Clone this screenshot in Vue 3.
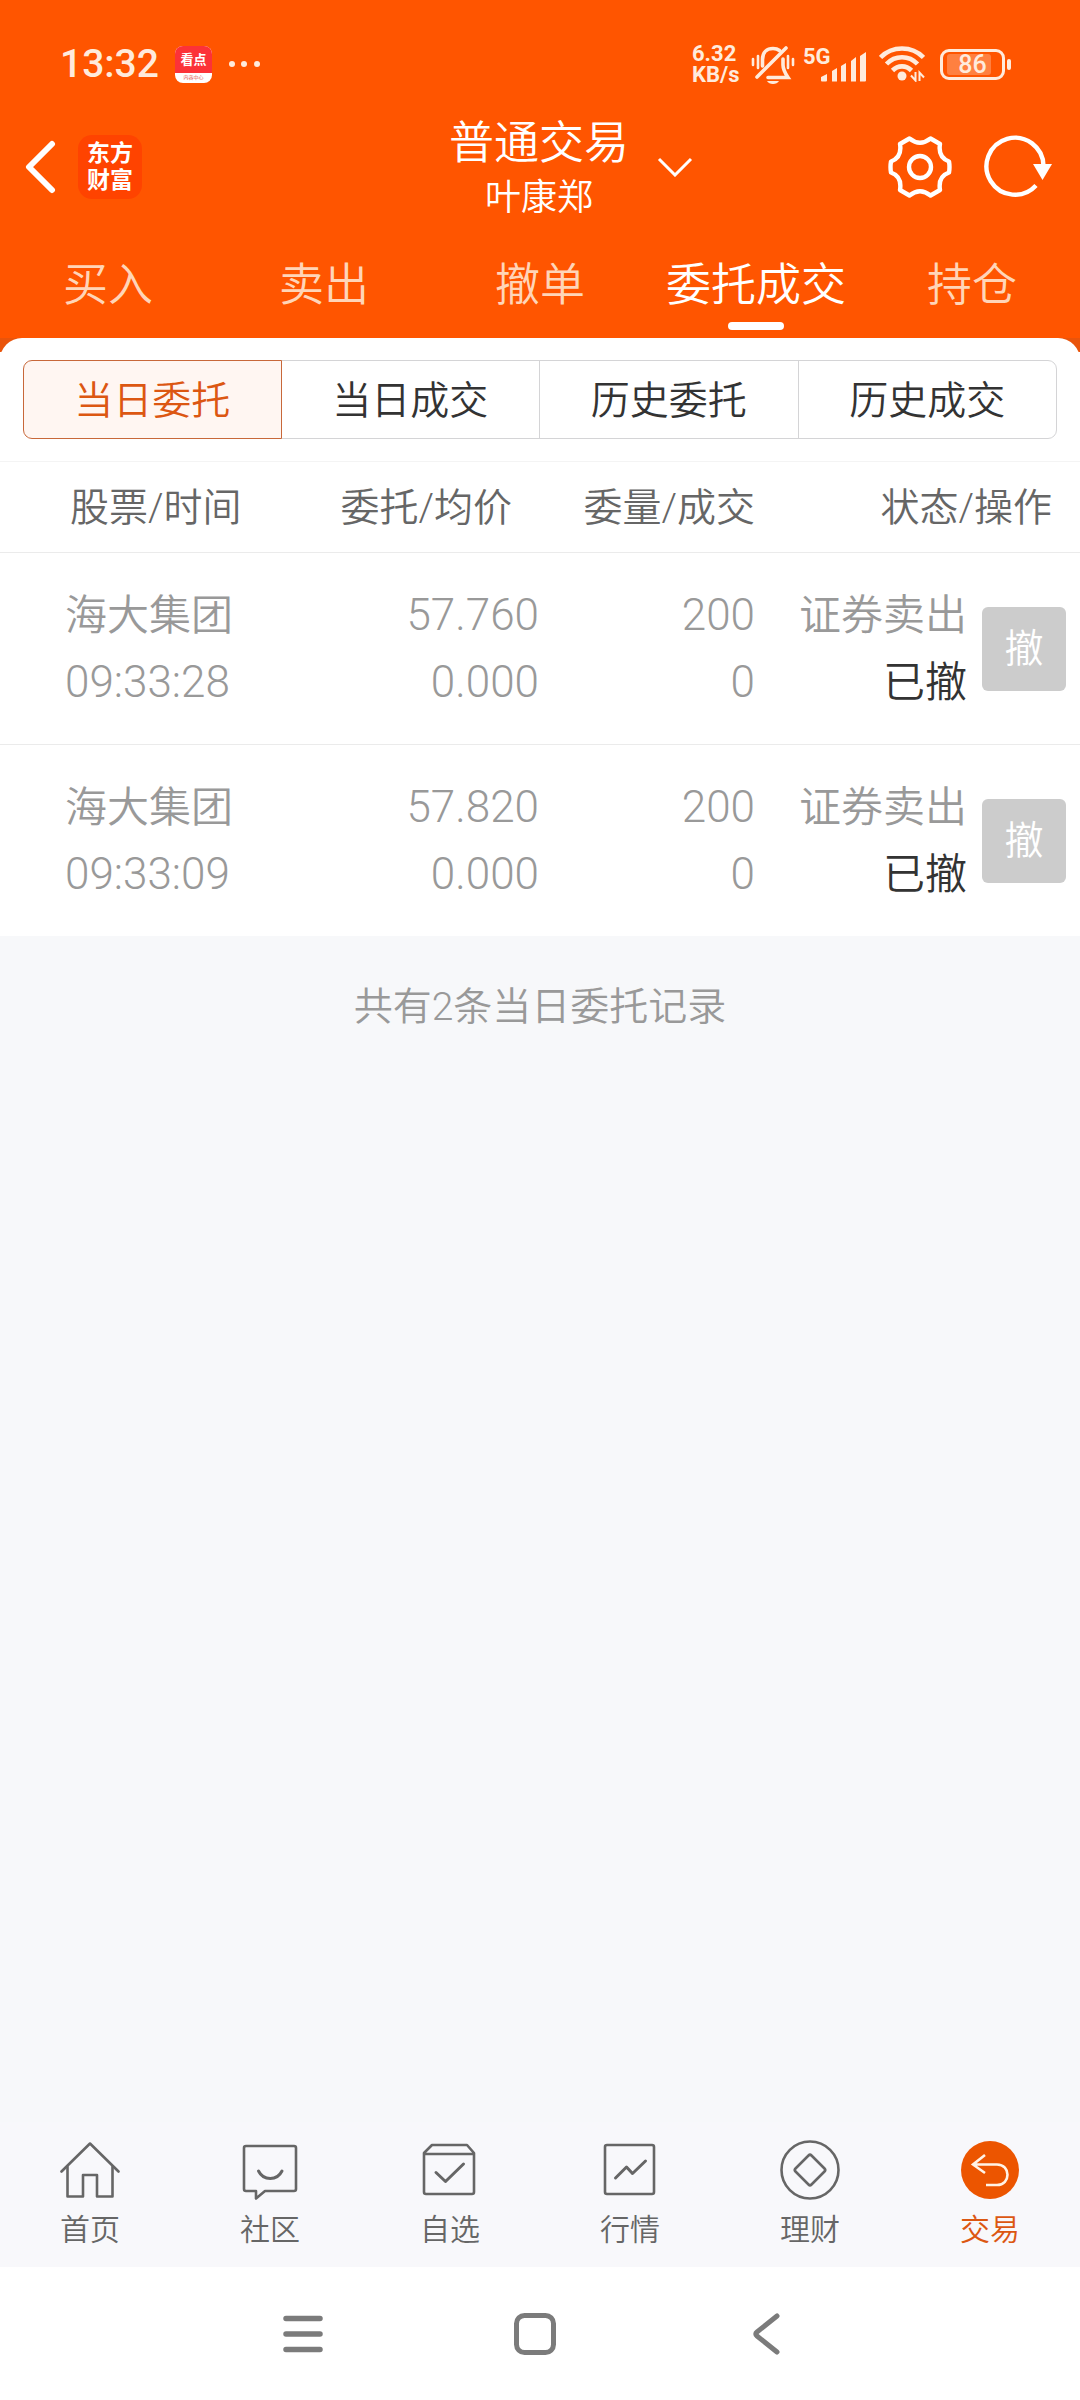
<template>
    <div class="trade-page">
        <header class="header">
            <div class="status-bar">
                <div class="status-left">
                    <span class="clock">13:32</span>
                    <span class="app-badge">
                        <span class="app-badge-title">看点</span>
                        <span class="app-badge-sub">内容中心</span>
                    </span>
                    <svg class="dots" viewBox="0 0 32 8" width="32" height="8">
                        <circle cx="4" cy="4" r="3" />
                        <circle cx="16" cy="4" r="3" />
                        <circle cx="29" cy="4" r="3" />
                    </svg>
                </div>
                <div class="status-right">
                    <span class="net-speed">
                        <span>6.32</span>
                        <span>KB/s</span>
                    </span>
                    <svg class="bell" viewBox="0 0 44 40" width="44" height="40">
                        <g fill="none" stroke="currentColor" stroke-width="3.600" stroke-linecap="round">
                            <path d="M2 15v6M7 12v12M37 12v12M42 15v6" stroke-width="2.600" />
                            <path d="M11.500 22V15.500C11.500 8 16 4.500 22 4.500c3 0 5 .8 6.500 2" />
                            <path d="M32 15v6c0 5 2 8 5 12.500H17" />
                            <path d="M35 4L6 33" />
                        </g>
                        <path d="M16 37h12c-2 4-10 4-12 0z" fill="currentColor" />
                    </svg>
                    <span class="signal">
                        <span class="signal-type">5G</span>
                        <svg viewBox="0 0 46 30" width="46" height="30">
                            <path d="M0 25l6-3v6.500q0 1-1 1H1q-1 0-1-1zM11 19l5-3v13.500h-5zM20 14l5-3v18.500h-5zM30 9l5-4v24.500h-5zM39 4l6-4v28.500q0 1-1 1h-5z" fill="currentColor" />
                        </svg>
                    </span>
                    <svg class="wifi" viewBox="0 0 46 36" width="46" height="36">
                        <g fill="none" stroke="currentColor" stroke-width="4.600">
                            <path d="M1.500 11.500C13-.5 33-.5 44.500 11.500" />
                            <path d="M7.500 18C16 9 30 9 38.500 18" />
                            <path d="M13.500 24.500c5.500-5.500 13.500-5.500 19 0" />
                        </g>
                        <circle cx="23" cy="30" r="4.500" fill="currentColor" />
                        <path d="M36.500 26v8.500l-4.500-5M40.500 35v-8.500l4.500 5" fill="none" stroke="currentColor" stroke-width="2" />
                    </svg>
                    <span class="battery">
                        <span class="battery-body">
                            <span class="battery-level" :style="{ width: battery + '%' }"></span>
                            <span class="battery-text">{{ battery }}</span>
                        </span>
                        <span class="battery-tip"></span>
                    </span>
                </div>
            </div>

            <div class="title-bar">
                <div class="title-left">
                    <button class="icon-button" type="button" aria-label="返回">
                        <svg viewBox="0 0 32 54" width="32" height="54">
                            <path d="M28 4L5 27l23 23" fill="none" stroke="#fff" stroke-width="6" stroke-linecap="round" stroke-linejoin="round" />
                        </svg>
                    </button>
                    <a class="logo" href="#">东方<br>财富</a>
                </div>
                <div class="account">
                    <h1 class="account-title">普通交易</h1>
                    <p class="account-name">叶康郑</p>
                </div>
                <div class="title-right">
                    <button class="icon-button" type="button" aria-label="切换账户">
                        <svg viewBox="0 0 36 20" width="36" height="20">
                            <path d="M2 2l16 16L34 2" fill="none" stroke="#fff" stroke-width="3" />
                        </svg>
                    </button>
                    <div class="title-actions">
                        <button class="icon-button" type="button" aria-label="设置">
                            <svg viewBox="0 0 64 64" width="64" height="64">
                                <g fill="none" stroke="#fff" stroke-width="4.400" stroke-linejoin="round">
                                    <path d="M21.500 3.500Q32 12 42.500 3.500L52 9C50.500 18 54 24 61 26.500Q62 32 61 37.500C54 40 50.500 46 52 55L42.500 60.500Q32 52 21.500 60.500L12 55C13.500 46 10 40 3 37.500Q2 32 3 26.500C10 24 13.500 18 12 9Z" />
                                    <circle cx="32" cy="32" r="11" />
                                </g>
                            </svg>
                        </button>
                        <button class="icon-button" type="button" aria-label="刷新">
                            <svg viewBox="0 0 70 64" width="70" height="64">
                                <path d="M52 50.500A28.500 28.500 0 1 1 59.500 31" fill="none" stroke="#fff" stroke-width="4.400" />
                                <path d="M49 29h19l-9.500 16z" fill="#fff" />
                            </svg>
                        </button>
                    </div>
                </div>
            </div>

            <nav class="tabs">
                <a v-for="tab in tabs" :key="tab" href="#" class="tab" :class="{ 'is-active': tab === activeTab }" @click.prevent="activeTab = tab">
                    <span>{{ tab }}</span>
                </a>
            </nav>
        </header>

        <main class="content">
            <section class="panel-wrap">
                <div class="panel">
                    <div class="segment">
                        <button
                            v-for="item in segments"
                            :key="item"
                            type="button"
                            class="segment-item"
                            :class="{ 'is-active': item === activeSegment }"
                            @click="activeSegment = item"
                        >
                            {{ item }}
                        </button>
                    </div>

                    <table class="orders">
                        <colgroup>
                            <col class="col-stock">
                            <col class="col-price">
                            <col class="col-amount">
                            <col class="col-status">
                            <col class="col-action">
                        </colgroup>
                        <thead>
                            <tr>
                                <th class="stock">股票/时间</th>
                                <th class="price">委托/均价</th>
                                <th class="amount">委量/成交</th>
                                <th class="status" colspan="2">状态/操作</th>
                            </tr>
                        </thead>
                        <tbody>
                            <tr v-for="order in orders" :key="order.time">
                                <td class="stock">
                                    <div>{{ order.name }}</div>
                                    <div class="number">{{ order.time }}</div>
                                </td>
                                <td class="price">
                                    <div class="number">{{ order.price }}</div>
                                    <div class="number">{{ order.avgPrice }}</div>
                                </td>
                                <td class="amount">
                                    <div class="number">{{ order.amount }}</div>
                                    <div class="number">{{ order.filled }}</div>
                                </td>
                                <td class="status">
                                    <div>{{ order.type }}</div>
                                    <div class="state">{{ order.state }}</div>
                                </td>
                                <td class="action">
                                    <button type="button" class="cancel-button" disabled>撤</button>
                                </td>
                            </tr>
                        </tbody>
                    </table>
                </div>
            </section>

            <p class="summary">共有{{ orders.length }}条当日委托记录</p>
        </main>

        <nav class="bottom-nav">
            <a v-for="item in navItems" :key="item.label" href="#" class="nav-item" :class="{ 'is-active': item.icon === 'trade' }">
                <svg viewBox="0 0 60 60" width="60" height="60" fill="none" stroke="currentColor" stroke-width="2.600" stroke-linejoin="round" stroke-linecap="round">
                    <template v-if="item.icon === 'home'">
                        <path d="M1.500 31.500L30 3.500l28.500 28" />
                        <path d="M7.500 27v29.500H23V35h14v21.500h15.500V27" />
                    </template>
                    <template v-else-if="item.icon === 'chat'">
                        <path d="M6 6h48q2 0 2 2v41q0 2-2 2H25l-9 7.500V51H6q-2 0-2-2V8q0-2 2-2" />
                        <path d="M18.500 31c5 10 18.500 10 23.500 0" stroke-width="3" />
                    </template>
                    <template v-else-if="item.icon === 'box'">
                        <path d="M12 5h35l7 8v39q0 2-2 2H6q-2 0-2-2V13zM4 14h50" />
                        <path d="M16 32.500l9.500 9L43.500 24" stroke-width="3" />
                    </template>
                    <template v-else-if="item.icon === 'chart'">
                        <rect x="5" y="5" width="49" height="49" rx="2" />
                        <path d="M15.500 38L26.500 27l6 6.500L45.500 21" stroke-width="3" />
                    </template>
                    <template v-else-if="item.icon === 'money'">
                        <circle cx="30" cy="30" r="28.500" />
                        <path d="M28.500 15.500q1.500-1.500 3 0l13 13q1.500 1.500 0 3l-13 13q-1.500 1.500-3 0l-13-13q-1.500-1.500 0-3z" />
                    </template>
                    <template v-else>
                        <circle cx="30" cy="30" r="29" fill="#ec5500" stroke="none" />
                        <path d="M25 15L13 24.500 25 33M14 24.500h23c14 0 14 20.500 0 20.500H26" stroke="#fff3e6" stroke-width="2.600" stroke-linecap="butt" stroke-linejoin="miter" />
                    </template>
                </svg>
                <span class="nav-label">{{ item.label }}</span>
            </a>
        </nav>

        <div class="system-nav">
            <button type="button" class="icon-button" aria-label="最近任务">
                <svg viewBox="0 0 44 44" width="44" height="44" stroke="#7b7b7b" stroke-width="5.500" stroke-linecap="round">
                    <path d="M5 6.500h34M5 22h34M5 37.500h34" />
                </svg>
            </button>
            <button type="button" class="icon-button" aria-label="主屏幕">
                <svg viewBox="0 0 44 44" width="44" height="44" fill="none" stroke="#7b7b7b" stroke-width="5">
                    <rect x="3.500" y="3.500" width="37" height="37" rx="8" />
                </svg>
            </button>
            <button type="button" class="icon-button" aria-label="返回上一页">
                <svg viewBox="0 0 44 44" width="44" height="44" fill="none" stroke="#7b7b7b" stroke-width="5" stroke-linecap="round" stroke-linejoin="round">
                    <path d="M32 4L12 20q-2.500 2 0 4l20 16" />
                </svg>
            </button>
        </div>
    </div>
</template>

<script setup>
import { ref } from 'vue';

const battery = ref(86);

const tabs = ['买入', '卖出', '撤单', '委托成交', '持仓'];
const activeTab = ref('委托成交');

const segments = ['当日委托', '当日成交', '历史委托', '历史成交'];
const activeSegment = ref('当日委托');

const orders = ref([
    {
        name: '海大集团',
        time: '09:33:28',
        price: '57.760',
        avgPrice: '0.000',
        amount: 200,
        filled: 0,
        type: '证券卖出',
        state: '已撤'
    },
    {
        name: '海大集团',
        time: '09:33:09',
        price: '57.820',
        avgPrice: '0.000',
        amount: 200,
        filled: 0,
        type: '证券卖出',
        state: '已撤'
    }
]);

const navItems = [
    { label: '首页', icon: 'home' },
    { label: '社区', icon: 'chat' },
    { label: '自选', icon: 'box' },
    { label: '行情', icon: 'chart' },
    { label: '理财', icon: 'money' },
    { label: '交易', icon: 'trade' }
];
</script>

<style>
body {
    margin: 0;
    background: #f7f8fa;
}
</style>

<style scoped>
.trade-page {
    display: flex;
    flex-direction: column;
    min-height: 100vh;
    font-family: Roboto, "Noto Sans CJK SC", sans-serif;
    font-weight: 350;
    color: #333;
}

a {
    color: inherit;
    text-decoration: none;
}

button {
    font-family: inherit;
    font-weight: inherit;
    padding: 0;
    border: 0;
    background: none;
    color: inherit;
}

svg {
    display: block;
}

.icon-button {
    display: flex;
    align-items: center;
    justify-content: center;
}

.header {
    background: #ff5500;
    color: #fff;
}

/* Status bar */
.status-bar {
    display: flex;
    justify-content: space-between;
    align-items: center;
    height: 98px;
    padding: 30px 69px 0 60px;
    box-sizing: border-box;
    color: #ffebdc;
}

.status-left,
.status-right {
    display: flex;
    align-items: center;
}

.clock {
    font-size: 39px;
    line-height: 48px;
    font-weight: 500;
}

.app-badge {
    display: flex;
    flex-direction: column;
    width: 37px;
    height: 37px;
    margin: 0 16px;
    border-radius: 8px;
    overflow: hidden;
    background: #fff;
    text-align: center;
}

.app-badge-title {
    background: #fc3238;
    color: #fff;
    font-size: 13px;
    line-height: 27px;
    font-weight: 700;
}

.app-badge-sub {
    color: #d33;
    font-size: 5px;
    line-height: 9px;
}

.dots {
    fill: currentColor;
}

.status-right {
    font-weight: 700;
}

.net-speed {
    display: flex;
    flex-direction: column;
    width: 50px;
    margin-right: 9px;
    font-size: 22px;
    line-height: 21px;
}

.signal {
    display: flex;
    align-items: flex-end;
    height: 36px;
    margin-left: 8px;
}

.signal-type {
    align-self: flex-start;
    width: 18px;
    font-size: 22px;
    line-height: 21px;
}

.wifi {
    margin-left: 12px;
}

.battery {
    display: flex;
    align-items: center;
    gap: 2px;
    margin-left: 15px;
}

.battery-body {
    display: grid;
    align-items: center;
    width: 65px;
    height: 31px;
    padding: 2px 4px;
    box-sizing: border-box;
    border: 3px solid currentColor;
    border-radius: 9px;
}

.battery-level,
.battery-text {
    grid-area: 1 / 1;
}

.battery-level {
    height: 21px;
    background: #ff8040;
    border-radius: 3px;
}

.battery-text {
    font-size: 25px;
    line-height: 21px;
    font-weight: 500;
    text-align: center;
}

.battery-tip {
    width: 4px;
    height: 11px;
    border-radius: 2px;
    background: currentColor;
}

/* Title */
.title-bar {
    display: grid;
    grid-template-columns: 1fr auto 1fr;
    align-items: center;
    height: 138px;
    padding: 0 26px 0 24px;
}

.title-left {
    display: flex;
    align-items: center;
    gap: 22px;
}

.logo {
    width: 64px;
    height: 64px;
    padding-top: 5px;
    box-sizing: border-box;
    border-radius: 14px;
    background: #ff4300;
    font-size: 23px;
    line-height: 27px;
    font-weight: 700;
    text-align: center;
}

.account {
    padding-top: 4px;
    text-align: center;
}

.account-title {
    margin: 0;
    font-size: 45px;
    line-height: 58px;
    font-weight: inherit;
}

.account-name {
    margin: 0;
    font-size: 36px;
    line-height: 50px;
}

.title-right {
    display: flex;
    align-items: center;
    justify-content: space-between;
    padding-left: 28px;
}

.title-actions {
    display: flex;
    gap: 32px;
}

/* Tabs */
.tabs {
    display: grid;
    grid-template-columns: repeat(5, 1fr);
}

.tab {
    display: flex;
    flex-direction: column;
    align-items: center;
    gap: 8px;
    padding: 22px 0 8px;
    font-size: 45px;
    line-height: 56px;
    color: #ffd5b8;
    white-space: nowrap;
}

.tab::after {
    content: "";
    width: 56px;
    height: 8px;
    border-radius: 4px;
}

.tab.is-active {
    color: #fff;
}

.tab.is-active::after {
    background: #fff;
}

/* Orders */
.content {
    flex: 1;
    background: #f7f8fa;
}

.panel-wrap {
    background: linear-gradient(#e9540b 14px, #fff 14px);
}

.panel {
    padding-top: 22px;
    border-radius: 22px 22px 0 0;
    background: #fff;
}

.segment {
    display: grid;
    grid-template-columns: repeat(4, 1fr);
    margin: 0 23px 22px;
}

.segment-item {
    height: 79px;
    margin-left: -1px;
    padding-bottom: 6px;
    border: 1px solid #d4d4d6;
    font-size: 39px;
    color: #333;
}

.segment-item:first-child {
    margin-left: 0;
    border-radius: 9px 0 0 9px;
}

.segment-item:last-child {
    border-radius: 0 9px 9px 0;
}

.segment-item.is-active {
    position: relative;
    border-color: #c8683a;
    background: #fff6f2;
    color: #dc5712;
}

.orders {
    width: 100%;
    table-layout: fixed;
    border-collapse: separate;
    border-spacing: 0;
    border-top: 1px solid #f4f4f4;
}

.col-stock {
    width: 28%;
}

.col-price {
    width: 22%;
}

.col-amount,
.col-status {
    width: 20%;
}

.col-action {
    width: 10%;
}

th,
td {
    box-sizing: border-box;
    padding: 0;
    border-bottom: 1px solid #ebebeb;
    text-align: right;
    white-space: nowrap;
}

th {
    height: 91px;
    padding-bottom: 6px;
    font-size: 39px;
    font-weight: inherit;
    color: #666;
}

td {
    height: 192px;
    font-size: 42px;
    line-height: 67px;
    color: #999;
}

tbody tr:last-child td {
    height: 191px;
    border-bottom: 0;
}

.number {
    font-size: 44px;
}

.stock {
    padding-left: 65px;
    text-align: left;
}

th.stock {
    padding-left: 70px;
}

th.price {
    padding-right: 28px;
}

td.price,
.amount {
    padding-right: 1px;
}

td.status {
    padding-right: 5px;
}

th.status {
    padding-right: 28px;
}

.state {
    color: #333;
}

.action {
    padding-right: 14px;
}

.cancel-button {
    width: 84px;
    height: 84px;
    padding-bottom: 7px;
    border-radius: 6px;
    background: #ccc;
    color: #fff;
    font-size: 39px;
    vertical-align: middle;
}

.summary {
    margin: 0;
    padding: 41px 0;
    font-size: 39px;
    line-height: 60px;
    text-align: center;
    color: #999;
}

/* Bottom navigation */
.bottom-nav {
    display: grid;
    grid-template-columns: repeat(6, 1fr);
    padding: 18px 0 17px;
    background: #f8f8fb;
}

.nav-item {
    display: flex;
    flex-direction: column;
    align-items: center;
    gap: 10px;
    color: #666;
}

.nav-label {
    font-size: 30px;
    line-height: 40px;
}

.nav-item.is-active {
    color: #dc5712;
}

.system-nav {
    display: flex;
    justify-content: center;
    align-items: center;
    height: 133px;
    padding-right: 10px;
    background: #fff;
}

.system-nav .icon-button {
    width: 232px;
}
</style>
